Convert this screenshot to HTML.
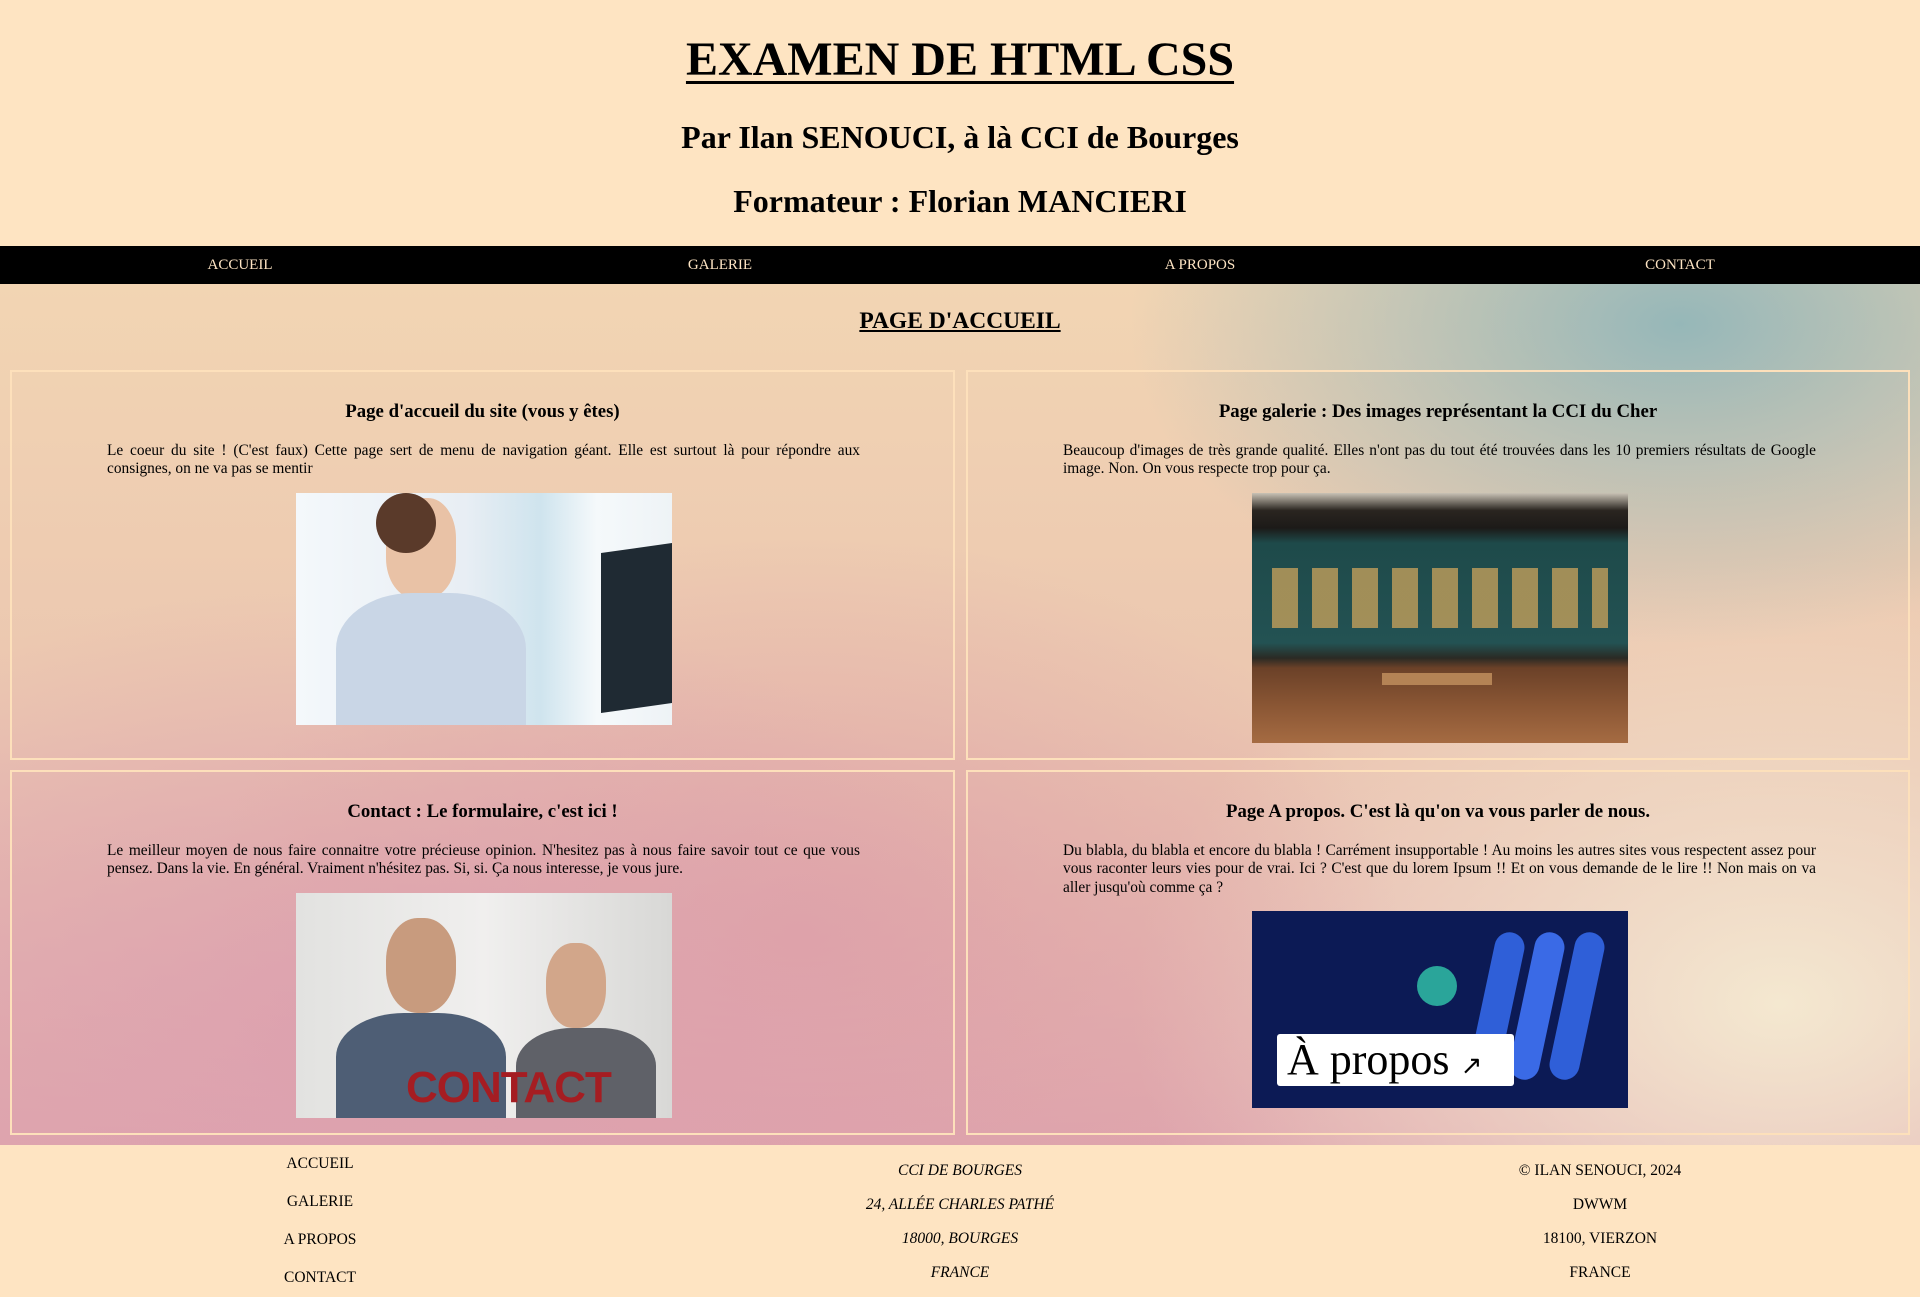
<!DOCTYPE html>
<html><head><meta charset="utf-8"><style>
*{margin:0;padding:0;box-sizing:border-box}
body{width:1920px;height:1297px;overflow:hidden;background:#fee4c2;font-family:"Liberation Serif",serif;color:#000;position:relative}
.a{position:absolute}
.c{text-align:center;white-space:nowrap}
h1{position:absolute;left:0;width:1920px;top:32px;text-align:center;font-size:48px;text-decoration:underline;text-decoration-thickness:3px;text-underline-offset:6px}
.h2{position:absolute;left:0;width:1920px;text-align:center;font-size:32px;font-weight:bold}
nav{position:absolute;left:0;top:246px;width:1920px;height:38px;background:#000;display:flex}
nav div{flex:1;text-align:center;color:#fde4c3;font-size:15px;line-height:38px}
main{position:absolute;left:0;top:284px;width:1920px;height:861px;overflow:hidden;
background:
radial-gradient(ellipse 550px 320px at 1680px 40px,rgba(140,180,185,.9),rgba(140,180,185,0)),
radial-gradient(ellipse 700px 450px at 350px 750px,rgba(220,160,175,.9),rgba(220,160,175,0)),
radial-gradient(ellipse 600px 400px at 800px 650px,rgba(220,155,165,.7),rgba(220,155,165,0)),
radial-gradient(ellipse 650px 450px at 1780px 720px,rgba(244,232,208,1),rgba(244,232,208,0)),
linear-gradient(180deg,#f2d5b3 0%,#ebc6b0 50%,#dfa6ae 100%)}
.card{position:absolute;border:2px solid #fde0bb}
.card h3{position:absolute;left:0;right:0;text-align:center;font-size:18.8px;top:29px}
.card p{position:absolute;left:95px;width:753px;font-size:15.4px;line-height:18.4px;text-align:justify;top:70px}
.img{position:absolute;left:284px;overflow:hidden}
.ft{position:absolute;font-size:15.5px;text-align:center;width:400px}
</style></head><body>
<h1>EXAMEN DE HTML CSS</h1>
<div class="h2" style="top:119px">Par Ilan SENOUCI, à là CCI de Bourges</div>
<div class="h2" style="top:183px">Formateur : Florian MANCIERI</div>
<nav><div>ACCUEIL</div><div>GALERIE</div><div>A PROPOS</div><div>CONTACT</div></nav>
<main>
<div class="a c" style="left:0;width:1920px;top:24px;font-size:23.5px;font-weight:bold;text-decoration:underline">PAGE D'ACCUEIL</div>

<div class="card" style="left:10px;top:86px;width:945px;height:390px">
<h3>Page d'accueil du site (vous y êtes)</h3>
<p>Le coeur du site ! (C'est faux) Cette page sert de menu de navigation géant. Elle est surtout là pour répondre aux consignes, on ne va pas se mentir</p>
<div class="img" style="top:121px;width:376px;height:232px;background:linear-gradient(90deg,#f4f8fb 0%,#e8eef4 45%,#cfe4ee 65%,#f5f9fb 80%,#eef3f6 100%)">
<div class="a" style="left:305px;top:55px;width:71px;height:160px;background:#1f2a33;transform:skewY(-8deg)"></div>
<div class="a" style="left:90px;top:5px;width:70px;height:100px;border-radius:40%;background:#e9c2a6"></div>
<div class="a" style="left:80px;top:0;width:60px;height:60px;border-radius:50%;background:#5a3a2a"></div>
<div class="a" style="left:40px;top:100px;width:190px;height:140px;border-radius:40% 40% 0 0;background:#c9d6e6"></div>
</div>
</div>

<div class="card" style="left:966px;top:86px;width:944px;height:390px">
<h3>Page galerie : Des images représentant la CCI du Cher</h3>
<p>Beaucoup d'images de très grande qualité. Elles n'ont pas du tout été trouvées dans les 10 premiers résultats de Google image. Non. On vous respecte trop pour ça.</p>
<div class="img" style="top:121px;width:376px;height:250px;background:linear-gradient(180deg,#c9c2b5 0%,#2a2520 7%,#1c1a18 14%,#1e4a4a 20%,#235253 60%,#2a2a24 66%,#6b4128 70%,#8a5634 85%,#a56b42 100%)">
<div class="a" style="left:20px;top:75px;width:336px;height:60px;background:repeating-linear-gradient(90deg,#b89a5a 0 26px,transparent 26px 40px);opacity:.85"></div>
<div class="a" style="left:130px;top:180px;width:110px;height:12px;background:#b48355"></div>
</div>
</div>

<div class="card" style="left:10px;top:486px;width:945px;height:365px">
<h3>Contact : Le formulaire, c'est ici !</h3>
<p>Le meilleur moyen de nous faire connaitre votre précieuse opinion. N'hesitez pas à nous faire savoir tout ce que vous pensez. Dans la vie. En général. Vraiment n'hésitez pas. Si, si. Ça nous interesse, je vous jure.</p>
<div class="img" style="top:121px;width:376px;height:225px;background:linear-gradient(90deg,#e2e2e0,#f0efee 50%,#d8d8d6)">
<div class="a" style="left:90px;top:25px;width:70px;height:95px;border-radius:45%;background:#c89b7e"></div>
<div class="a" style="left:250px;top:50px;width:60px;height:85px;border-radius:45%;background:#d2a68a"></div>
<div class="a" style="left:40px;top:120px;width:170px;height:110px;border-radius:40% 40% 0 0;background:#4e5e75"></div>
<div class="a" style="left:220px;top:135px;width:140px;height:95px;border-radius:40% 40% 0 0;background:#5f6168"></div>
<div class="a" style="left:110px;top:170px;font:bold 44px 'Liberation Sans',sans-serif;color:#a51d22;letter-spacing:-1px">CONTACT</div>
</div>
</div>

<div class="card" style="left:966px;top:486px;width:944px;height:365px">
<h3>Page A propos. C'est là qu'on va vous parler de nous.</h3>
<p>Du blabla, du blabla et encore du blabla ! Carrément insupportable ! Au moins les autres sites vous respectent assez pour vous raconter leurs vies pour de vrai. Ici ? C'est que du lorem Ipsum !! Et on vous demande de le lire !! Non mais on va aller jusqu'où comme ça ?</p>
<div class="img" style="top:139px;width:376px;height:197px;background:#0c1a55">
<div class="a" style="left:230px;top:20px;width:30px;height:150px;border-radius:15px;background:#2f5fd8;transform:rotate(12deg)"></div>
<div class="a" style="left:270px;top:20px;width:30px;height:150px;border-radius:15px;background:#3a6ae6;transform:rotate(12deg)"></div>
<div class="a" style="left:310px;top:20px;width:30px;height:150px;border-radius:15px;background:#2f5fd8;transform:rotate(12deg)"></div>
<div class="a" style="left:165px;top:55px;width:40px;height:40px;border-radius:50%;background:#2aa59a"></div>
<div class="a" style="left:25px;top:123px;width:237px;height:52px;background:#fff;border-radius:3px;font-size:44px;line-height:52px;padding-left:10px">À propos <span style="font-size:26px">↗</span></div>
</div>
</div>
</main>
<div class="ft" style="left:120px;top:1145px;line-height:38px">ACCUEIL<br>GALERIE<br>A PROPOS<br>CONTACT</div>
<div class="ft" style="left:760px;top:1154px;line-height:34px;font-style:italic">CCI DE BOURGES<br>24, ALLÉE CHARLES PATHÉ<br>18000, BOURGES<br>FRANCE</div>
<div class="ft" style="left:1400px;top:1154px;line-height:34px">© ILAN SENOUCI, 2024<br>DWWM<br>18100, VIERZON<br>FRANCE</div>
</body></html>
